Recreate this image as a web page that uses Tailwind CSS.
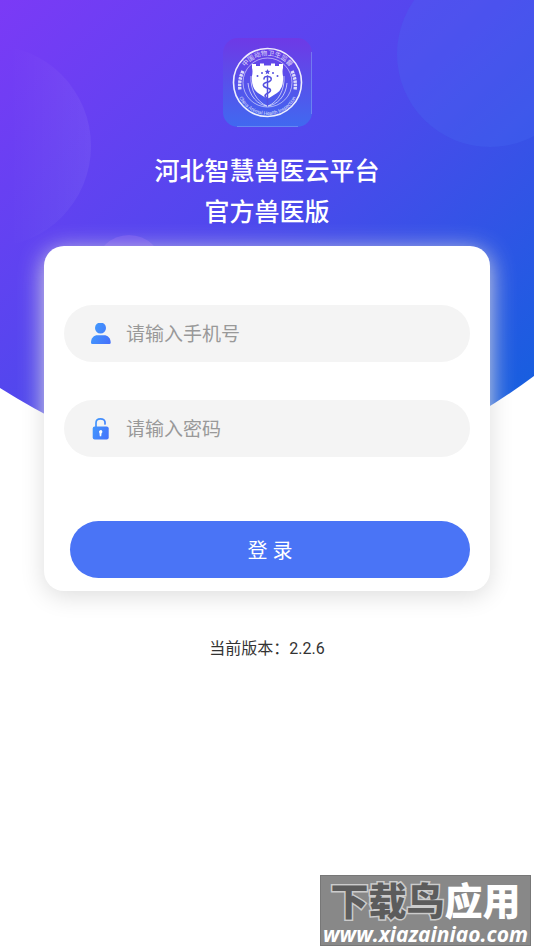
<!DOCTYPE html>
<html lang="zh-CN">
<head>
    <meta charset="UTF-8">
    <meta name="viewport" content="width=device-width, initial-scale=1.0">
    <title>河北智慧兽医云平台</title>
    <script src="https://cdn.jsdelivr.net/npm/@tailwindcss/browser@4"></script>
</head>
<body class="relative min-h-screen bg-white font-['Roboto','Noto_Sans_CJK_SC',sans-serif]">
    <!-- Background -->
    <svg class="absolute inset-x-0 top-0 -z-10 w-full" viewBox="0 0 534 480" aria-hidden="true">
        <defs>
            <linearGradient id="bg" gradientUnits="userSpaceOnUse" x1="0" y1="0" x2="440" y2="480">
                <stop offset="0" stop-color="#7b3af6"/>
                <stop offset="0.5" stop-color="#4f48ed"/>
                <stop offset="1" stop-color="#165fdf"/>
            </linearGradient>
            <linearGradient id="bubbleLeft" gradientUnits="userSpaceOnUse" x1="10" y1="0" x2="91" y2="0">
                <stop offset="0" stop-color="#fff" stop-opacity="0"/>
                <stop offset="1" stop-color="#fff" stop-opacity="0.06"/>
            </linearGradient>
            <clipPath id="dome">
                <path d="M0 0H534V376Q400 476 267 476Q140 476 0 388Z"/>
            </clipPath>
        </defs>
        <g clip-path="url(#dome)">
            <rect width="534" height="480" fill="url(#bg)"/>
            <circle cx="-10" cy="146" r="101" fill="url(#bubbleLeft)"/>
            <circle cx="490" cy="54" r="93" fill="#4670f5" fill-opacity="0.25"/>
            <circle cx="129" cy="269" r="34" fill="#a070f5" fill-opacity="0.3"/>
        </g>
    </svg>

    <div id="app" class="flex flex-col items-center px-11 pt-[38px]">
        <!-- Logo -->
        <svg class="size-[89px]" viewBox="0 0 89 89" role="img" aria-label="中国动物卫生监督">
            <defs>
                <linearGradient id="tile" x1="0" y1="0" x2="0" y2="1">
                    <stop offset="0" stop-color="#6e39e6"/>
                    <stop offset="1" stop-color="#4069f0"/>
                </linearGradient>
                <path id="arcTop" d="M17 45A27.500 27.500 0 0 1 72 45"/>
                <path id="arcBottom" d="M12.500 45A32 32 0 0 0 76.500 45"/>
            </defs>
            <rect width="89" height="89" rx="15" fill="url(#tile)"/>
            <path d="M88.500 14V76M14 88.500H75" stroke="#7f9cf5" stroke-width="1" opacity="0.6"/>
            <g fill="none" stroke="#fff">
                <circle cx="44.500" cy="44.500" r="34" stroke-width="1.600" opacity="0.9"/>
                <circle cx="44.500" cy="44.500" r="24.500" stroke-width="0.900" opacity="0.6"/>
                <path d="M28 38C27 52 34 64 44 68M61 38C62 52 55 64 45 68M25 45C26 58 35 67 44 68M64 45C63 58 54 67 45 68" stroke-width="0.800" opacity="0.8"/>
                <path d="M20 33Q15.500 42 17 52M69 33Q73.500 42 72 52" stroke-width="3.400" stroke-dasharray="2.500 0.800" opacity="0.8"/>
            </g>
            <path d="M29 30V26H33V28H37V25.500H41V27.500H48V25.500H52V28H56V26H60V30Q59 33 60 38Q61 50 54 55L44.500 61L35 55Q28 50 29 38Q30 33 29 30Z" fill="#fff"/>
            <g fill="none" stroke="#5550df" stroke-linecap="round">
                <path d="M44.500 38V67" stroke-width="1.500"/>
                <path d="M41 41Q41 38 45 38.500Q49 39 48 42Q47 44 43 44.500Q39 46 41 48.500Q43 50 46 50.500Q49 52 46 54.500Q42 56 42 58Q43 60 45 61" stroke-width="1.600"/>
            </g>
            <g fill="#5550df">
                <path d="M44.500 31l.8 1.800 2 .2-1.500 1.300.5 2-1.800-1.100-1.800 1.100.5-2-1.500-1.300 2-.2z"/>
                <circle cx="39" cy="35" r="1"/>
                <circle cx="50" cy="35" r="1"/>
                <circle cx="34.500" cy="38" r="1"/>
                <circle cx="54.500" cy="38" r="1"/>
            </g>
            <g fill="#fff" opacity="0.8" text-anchor="middle">
                <text font-size="6.500"><textPath href="#arcTop" startOffset="50%">中国动物卫生监督</textPath></text>
                <text font-size="5"><textPath href="#arcBottom" startOffset="50%">China Animal Health Inspection</textPath></text>
            </g>
        </svg>

        <h1 class="mt-6 text-center text-[25px] leading-[41px] font-medium text-white">河北智慧兽医云平台<br>官方兽医版</h1>

        <!-- Login Form -->
        <form id="loginForm" class="mt-[13px] w-full rounded-[20px] bg-white px-5 pt-[59px] pb-[13px] shadow-[0_5px_25px_#dddddd]">
            <label class="flex h-[57px] items-center rounded-full bg-[#f4f4f4] pl-[26px]">
                <svg class="size-[22px] shrink-0" viewBox="0 0 22 22" aria-hidden="true">
                    <defs>
                        <linearGradient id="icon" gradientUnits="userSpaceOnUse" x1="2" y1="10" x2="20" y2="18">
                            <stop offset="0" stop-color="#4297fd"/>
                            <stop offset="1" stop-color="#4672fb"/>
                        </linearGradient>
                    </defs>
                    <circle cx="10.500" cy="5" r="5.500" fill="url(#icon)"/>
                    <path d="M1 19.500C1 14.800 4 12.200 7.500 12.200H14C17.500 12.200 20.700 14.800 20.700 19.500Q20.700 21 19.500 21H2.200Q1 21 1 19.500Z" fill="url(#icon)"/>
                </svg>
                <input type="tel" id="phone" aria-label="手机号" placeholder="请输入手机号" class="ml-3.5 min-w-0 flex-1 bg-transparent pt-1 text-[19px] text-[#333] outline-none placeholder:text-[#999]">
            </label>

            <label class="mt-[38px] flex h-[57px] items-center rounded-full bg-[#f4f4f4] pl-[26px]">
                <svg class="size-[22px] shrink-0" viewBox="0 0 22 22" aria-hidden="true">
                    <path d="M6 10V5Q6 0.900 10.500 0.900Q14.500 0.900 15 4V6" fill="none" stroke="url(#icon)" stroke-width="1.700" stroke-linecap="round"/>
                    <rect x="2.700" y="8.500" width="16" height="13" rx="2" fill="url(#icon)"/>
                    <path d="M9 14a1.700 1.700 0 1 1 2.600 1.200L11.200 18.300H9.800L9.500 15.200Z" fill="#fff"/>
                </svg>
                <input type="password" id="password" aria-label="密码" placeholder="请输入密码" class="ml-3.5 min-w-0 flex-1 bg-transparent pt-1 text-[19px] text-[#333] outline-none placeholder:text-[#999]">
            </label>

            <div class="mt-16 pl-1.5">
                <button type="submit" class="h-[57px] w-full rounded-full bg-[#4a74f6] pt-0.5 text-xl text-white">登 录</button>
            </div>
        </form>

        <p class="mt-[46px] text-base text-[#333]">当前版本：2.2.6</p>
    </div>

    <!-- Site badge -->
    <div class="absolute right-[3px] bottom-1 flex h-[71px] w-[211px] flex-col items-center border border-[#777] bg-[#888] pt-1.5">
        <div class="text-[38px] leading-10 font-black whitespace-nowrap">
            <span class="text-[#5c5c5c] [paint-order:stroke] [-webkit-text-stroke:3px_#ccc]">下载鸟</span><span class="text-white">应用</span>
        </div>
        <div class="mt-0.5 font-['Open_Sans',sans-serif] text-[21px] leading-5 font-bold text-white italic">www.xiazainiao.com</div>
    </div>
</body>
</html>
